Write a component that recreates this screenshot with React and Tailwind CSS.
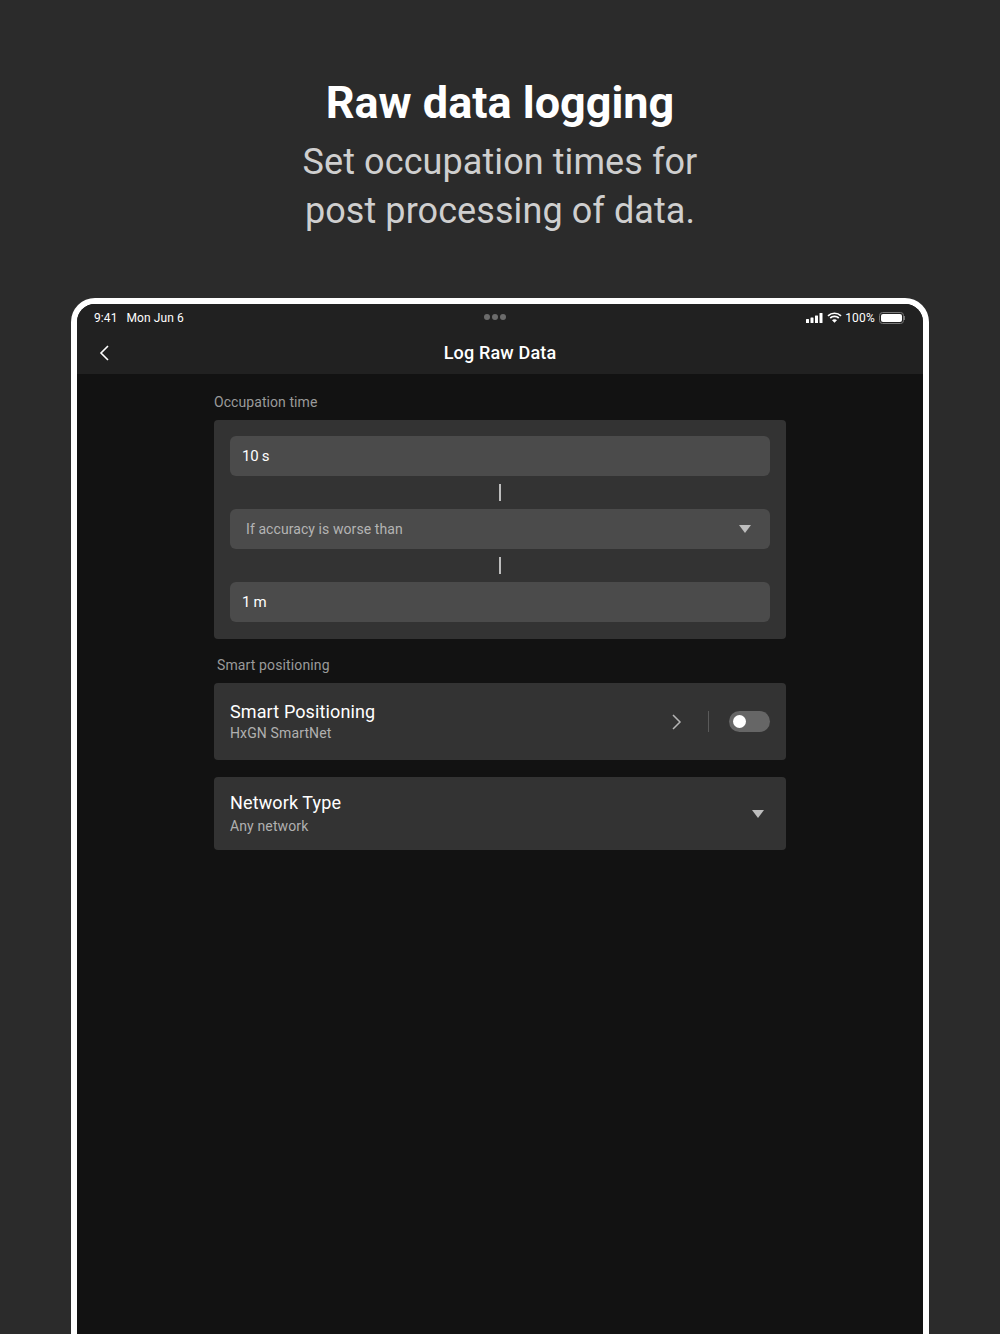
import React from 'react';

const Caret = ({ className }) => (
  <svg width="12" height="8" viewBox="0 0 12 8" className={className}>
    <path d="M0 0h12L6 8z" fill="#bdbdbd" />
  </svg>
);

const Tick = () => (
  <div className="h-[33px] flex items-center justify-center">
    <div className="w-[2px] h-[17px] bg-[#bdbdbd]" />
  </div>
);

const StatusIcons = () => (
  <div className="flex items-center">
    <svg width="17" height="10" viewBox="0 0 17 10" className="mr-[4px]">
      <rect x="0" y="6" width="3" height="4" rx="0.5" fill="#fff" />
      <rect x="4.5" y="4.5" width="3" height="5.5" rx="0.5" fill="#fff" />
      <rect x="9" y="2.5" width="3" height="7.5" rx="0.5" fill="#fff" />
      <rect x="13.5" y="0" width="3" height="10" rx="0.5" fill="#fff" />
    </svg>
    <svg width="15" height="11" viewBox="0 0 15 11" fill="none" stroke="#fff" strokeWidth="1.7">
      <path d="M1 3.8C4.6.4 10.4.4 14 3.8" />
      <path d="M3.2 6C5.6 3.8 9.4 3.8 11.8 6" />
      <path d="M5.4 8.2c1.2-1 3-1 4.2 0L7.5 10.4z" fill="#fff" strokeWidth="0.6" />
    </svg>
    <span className="ml-[3px] text-[12px] leading-none text-white tracking-[0.2px]">100%</span>
    <div className="ml-[4px] flex items-center">
      <div className="w-[25px] h-[12px] rounded-[3.5px] border border-[#777] p-[1px]">
        <div className="w-full h-full rounded-[2px] bg-white" />
      </div>
      <div className="w-[1px] h-[4px] bg-[#777]" />
    </div>
  </div>
);

const App = () => {
  return (
    <div className="h-[1334px] overflow-hidden bg-[#2b2b2b] font-['Roboto',sans-serif]">
      <header className="h-[298px] pt-[74px] text-center">
        <h1 className="text-[45px] leading-[57px] font-bold text-white">Raw data logging</h1>
        <p className="mt-[7px] text-[36px] leading-[49px] tracking-[0.08px] text-[#cfcfcf]">
          Set occupation times for
          <br />
          post processing of data.
        </p>
      </header>

      <div className="mx-[71px] h-[1036px] flex flex-col border-[6px] border-b-0 border-white rounded-t-[24px] overflow-hidden bg-[#121212]">
        <div className="h-[70px] shrink-0 bg-[#212121]">
          <div className="h-[27px] pl-[17px] pr-[18px] flex items-center justify-between relative">
            <span className="text-[12px] leading-none text-white tracking-[0.1px]">
              9:41<span className="ml-[9px]">Mon Jun 6</span>
            </span>
            <div className="absolute left-[407px] top-[10px] flex gap-[2px]">
              <div className="w-[6px] h-[6px] rounded-full bg-[#6b6b6b]" />
              <div className="w-[6px] h-[6px] rounded-full bg-[#6b6b6b]" />
              <div className="w-[6px] h-[6px] rounded-full bg-[#6b6b6b]" />
            </div>
            <StatusIcons />
          </div>
          <div className="h-[43px] flex items-center justify-center relative">
            <svg width="10" height="16" viewBox="0 0 10 16" fill="none" stroke="#fff" strokeWidth="1.6" className="absolute left-[22px] top-[14px]">
              <path d="M9 1L2 8l7 7" />
            </svg>
            <span className="text-[18px] font-medium tracking-[0.17px] text-white">Log Raw Data</span>
          </div>
        </div>

        <main className="w-[572px] mx-auto">
          <p className="pt-[20px] h-[46px] text-[14px] leading-[17px] tracking-[0.07px] text-[#9a9a9a]">Occupation time</p>

          <section className="h-[219px] p-[16px] rounded-[4px] bg-[#333333]">
            <div className="h-[40px] pl-[12px] flex items-center rounded-[6px] bg-[#4b4b4b] text-[15px] tracking-[-0.3px] text-white">10 s</div>
            <Tick />
            <div className="h-[40px] pl-[16px] pr-[19px] flex items-center justify-between rounded-[6px] bg-[#4b4b4b] text-[14px] tracking-[0.08px] text-[#b4b4b4]">
              If accuracy is worse than
              <Caret />
            </div>
            <Tick />
            <div className="h-[40px] pl-[12px] flex items-center rounded-[6px] bg-[#4b4b4b] text-[15px] tracking-[-0.3px] text-white">1 m</div>
          </section>

          <p className="pl-[3px] pt-[18px] h-[44px] text-[14px] leading-[17px] tracking-[0.13px] text-[#9a9a9a]">Smart positioning</p>

          <section className="h-[77px] pl-[16px] pr-[16px] flex items-center rounded-[4px] bg-[#333333]">
            <div className="flex-1">
              <div className="text-[18px] leading-[22px] tracking-[0.12px] text-white">Smart Positioning</div>
              <div className="mt-[1px] text-[14px] leading-[18px] tracking-[0.13px] text-[#b0b0b0]">HxGN SmartNet</div>
            </div>
            <svg width="10" height="16" viewBox="0 0 10 16" fill="none" stroke="#b5b5b5" strokeWidth="1.5" className="translate-x-[1px]">
              <path d="M1 1l7 7-7 7" />
            </svg>
            <div className="ml-[27px] w-[1px] h-[21px] bg-[#5a5a5a]" />
            <div className="ml-[20px] w-[41px] h-[21px] pl-[4px] flex items-center rounded-full bg-[#666666]">
              <div className="w-[13px] h-[13px] rounded-full bg-white" />
            </div>
          </section>

          <section className="mt-[17px] h-[73px] pl-[16px] pr-[22px] flex items-center justify-between rounded-[4px] bg-[#333333]">
            <div>
              <div className="-mt-[1px] text-[18px] leading-[22px] tracking-[0.12px] text-white">Network Type</div>
              <div className="mt-[3px] text-[14px] leading-[18px] tracking-[0.13px] text-[#b0b0b0]">Any network</div>
            </div>
            <Caret />
          </section>
        </main>
      </div>
    </div>
  );
};

export default App;
